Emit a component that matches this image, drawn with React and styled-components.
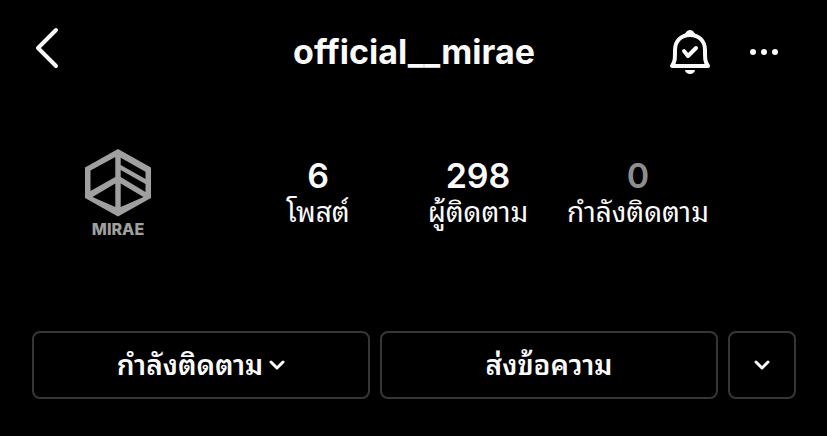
import React from "react";
import styled, { createGlobalStyle } from "styled-components";

const stats = [
  { label: "โพสต์", value: 6 },
  { label: "ผู้ติดตาม", value: 298 },
  { label: "กำลังติดตาม", value: 0, muted: true }
];

const BackIcon = () => (
  <svg width="26" height="50" viewBox="0 0 26 50" aria-hidden="true">
    <path
      d="M22 3 4 21l18 18"
      fill="none"
      stroke="currentColor"
      strokeWidth="4"
      strokeLinecap="round"
      strokeLinejoin="round"
    />
  </svg>
);

const BellIcon = () => (
  <svg width="42" height="46" viewBox="0 0 42 46" aria-hidden="true">
    <g
      fill="none"
      stroke="currentColor"
      strokeWidth="4"
      strokeLinecap="round"
      strokeLinejoin="round"
    >
      <path d="M3 37h36c-3-4-3-7-3-16C36 12 30 6 21 6S6 12 6 21c0 9 0 12-3 16z" />
      <path d="m15 22 4 5 8-8" />
    </g>
    <path
      d="M14 6c3-1 3-5 7-5s4 4 7 5zM16 41h10a5 4 0 0 1-10 0z"
      fill="currentColor"
    />
  </svg>
);

const MoreIcon = () => (
  <svg width="28" height="8" viewBox="0 0 28 8" fill="currentColor" aria-hidden="true">
    <circle cx="3" cy="4" r="3" />
    <circle cx="14" cy="4" r="3" />
    <circle cx="25" cy="4" r="3" />
  </svg>
);

const ChevronIcon = () => (
  <svg width="16" height="10" viewBox="0 0 16 10" aria-hidden="true">
    <path
      d="m2 2 6 6 6-6"
      fill="none"
      stroke="currentColor"
      strokeWidth="3"
      strokeLinecap="round"
      strokeLinejoin="round"
    />
  </svg>
);

// Solid hexagon with the five panes cut out of it
const HexagonMark = () => (
  <svg width="68" height="68" viewBox="0 0 68 68" aria-hidden="true">
    <path
      fill="currentColor"
      fillRule="evenodd"
      d="M34 0 67 18.500V49L34 67.500 1 49V18.500z
        M6.500 21.500 31.300 8v20L6.500 42z
        M36.700 8.700 61.500 22.700v7.300L36.700 16z
        M36.700 21 61.500 35v8L36.700 28z
        M31.300 34.500V58L8.500 48z
        M36.700 34.500V58L59.500 48z"
    />
  </svg>
);

const App = () => (
  <Page>
    <GlobalStyle />
    <Header>
      <IconButton type="button" aria-label="ย้อนกลับ">
        <BackIcon />
      </IconButton>
      <Username>official__mirae</Username>
      <Actions>
        <IconButton type="button" aria-label="การแจ้งเตือน">
          <BellIcon />
        </IconButton>
        <IconButton type="button" aria-label="ตัวเลือกเพิ่มเติม">
          <MoreIcon />
        </IconButton>
      </Actions>
    </Header>

    <Profile>
      <Avatar>
        <HexagonMark />
        <Wordmark>MIRAE</Wordmark>
      </Avatar>
      <Stats>
        {stats.map(({ label, value, muted }) => (
          <Stat key={label}>
            <Label>{label}</Label>
            <Count $muted={muted}>{value}</Count>
          </Stat>
        ))}
      </Stats>
    </Profile>

    <Buttons>
      <Button type="button">
        <ButtonText>กำลังติดตาม</ButtonText>
        <ChevronIcon />
      </Button>
      <Button type="button">
        <ButtonText>ส่งข้อความ</ButtonText>
      </Button>
      <Button type="button" $compact aria-label="บัญชีที่คล้ายกัน">
        <ChevronIcon />
      </Button>
    </Buttons>
  </Page>
);

export default App;

const GlobalStyle = createGlobalStyle`
  * {
    box-sizing: border-box;
  }

  body {
    margin: 0;
    background: #000;
    color: #fafafa;
    font-family: Inter, "Noto Sans Thai Looped", Loma, Garuda, "Noto Sans Thai", sans-serif;
  }
`;

const Page = styled.div`
  padding: 0 31px 36px 32px;
`;

const Header = styled.header`
  display: grid;
  grid-template-columns: 1fr auto 1fr;
  align-items: center;
  height: 104px;
`;

const IconButton = styled.button`
  display: flex;
  align-items: center;
  justify-self: start;
  padding: 2px;
  border: 0;
  background: none;
  color: inherit;
  cursor: pointer;
`;

const Username = styled.h1`
  margin: 0;
  font-size: 34px;
  font-weight: 700;
  line-height: 40px;
`;

const Actions = styled.div`
  display: flex;
  justify-content: flex-end;
  gap: 35px;
  padding-right: 16px;
`;

const Profile = styled.section`
  display: flex;
  padding: 45px 78px 90px 0;
`;

const Avatar = styled.div`
  display: flex;
  flex: 0 0 172px;
  flex-direction: column;
  align-items: center;
  margin-right: 34px;
  color: #a0a0a0;
`;

const Wordmark = styled.span`
  font-size: 16px;
  font-weight: 800;
  line-height: 24px;
`;

const Stats = styled.dl`
  display: flex;
  flex: 1;
  margin: 7px 0 0;
`;

const Stat = styled.div`
  display: flex;
  flex: 1;
  flex-direction: column-reverse;
  justify-content: flex-end;
  align-items: center;
`;

const Label = styled.dt`
  font-size: 28px;
  line-height: 32px;
  white-space: nowrap;
`;

const Count = styled.dd`
  margin: 0;
  color: ${props => (props.$muted ? "#8e8e8e" : "inherit")};
  font-size: 34px;
  font-weight: 600;
  line-height: 40px;
`;

const Buttons = styled.div`
  display: flex;
  gap: 10px;
`;

const Button = styled.button`
  display: flex;
  flex: ${props => (props.$compact ? "0 0 68px" : "1")};
  align-items: center;
  justify-content: center;
  gap: 6px;
  height: 68px;
  padding: 0;
  border: 2px solid #363636;
  border-radius: 8px;
  background: #000;
  color: inherit;
  font-family: inherit;
  font-size: 28px;
  font-weight: 600;
  white-space: nowrap;
  cursor: pointer;
`;

const ButtonText = styled.span`
  padding-bottom: 5px;
`;
